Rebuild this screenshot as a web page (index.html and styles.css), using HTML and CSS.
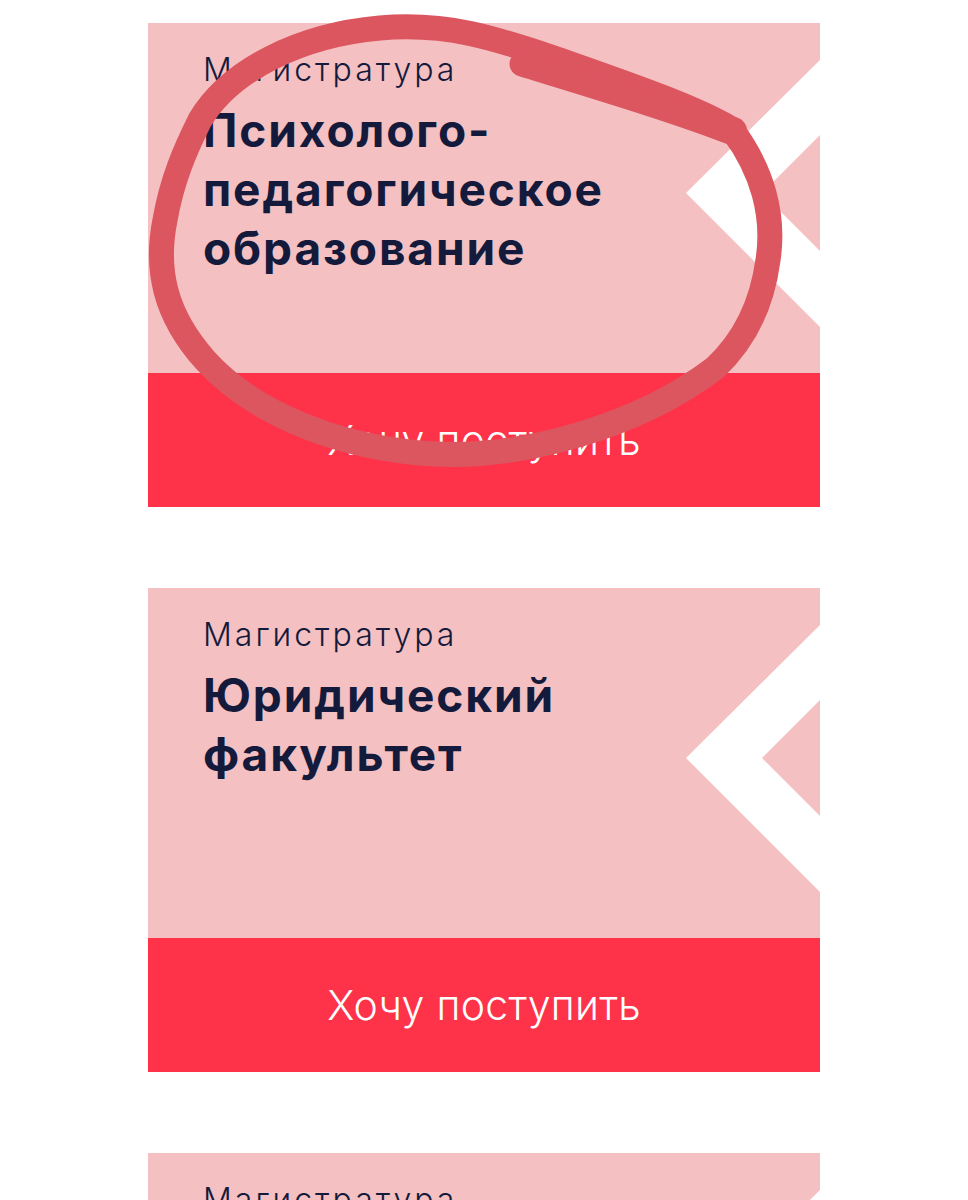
FILE: index.html
```html
<!DOCTYPE html>
<html lang="ru">
<head>
<meta charset="utf-8">
<title>Магистратура</title>
<link rel="stylesheet" href="styles.css">
</head>
<body>
<main class="list">
  <article class="card">
    <div class="card-body">
      <svg class="chevron" viewBox="0 0 134 267" aria-hidden="true"><polygon points="134,0 0,133 134,267 134,191 76,133 134,75" fill="#fff"/></svg>
      <p class="level">Магистратура</p>
      <h2 class="title">Психолого-<br>педагогическое<br>образование</h2>
    </div>
    <a class="cta" href="#">Хочу поступить</a>
  </article>
  <article class="card">
    <div class="card-body">
      <svg class="chevron" viewBox="0 0 134 267" aria-hidden="true"><polygon points="134,0 0,133 134,267 134,191 76,133 134,75" fill="#fff"/></svg>
      <p class="level">Магистратура</p>
      <h2 class="title">Юридический<br>факультет</h2>
    </div>
    <a class="cta" href="#">Хочу поступить</a>
  </article>
  <article class="card">
    <div class="card-body">
      <svg class="chevron" viewBox="0 0 134 267" aria-hidden="true"><polygon points="134,0 0,133 134,267 134,191 76,133 134,75" fill="#fff"/></svg>
      <p class="level">Магистратура</p>
      <h2 class="title">Экономический<br>факультет</h2>
    </div>
    <a class="cta" href="#">Хочу поступить</a>
  </article>
</main>
<svg class="scribble" viewBox="0 0 968 520" aria-hidden="true">
  <g fill="none" stroke="#dc5660" stroke-width="25" stroke-linecap="round" stroke-linejoin="round">
    <path d="M733 131 C762 170 775 215 768 260 C762 305 745 340 715 368 C640 425 520 462 420 453 C330 445 250 410 205 360 C165 315 155 270 165 220 C172 180 185 150 200 120 C230 70 300 35 380 28 C450 22 500 40 560 60 C630 85 690 105 730 128"/>
    <path d="M522 64 C600 88 680 112 733 133"/>
  </g>
  <circle cx="733" cy="131" r="14" fill="#dc5660"/>
</svg>
</body>
</html>
```
FILE: styles.css
```css
html, body {
  margin: 0;
  padding: 0;
  background: #ffffff;
}
body {
  position: relative;
  width: 968px;
  height: 1200px;
  overflow: hidden;
  font-family: "Inter", "Noto Sans", sans-serif;
}
.list {
  display: flex;
  flex-direction: column;
  align-items: center;
  gap: 81px;
  padding-top: 23px;
}
.card {
  width: 672px;
  display: flex;
  flex-direction: column;
}
.card-body {
  position: relative;
  height: 350px;
  background: #f4c0c1;
  padding: 0 55px;
  box-sizing: border-box;
  overflow: hidden;
}
.chevron {
  position: absolute;
  right: 0;
  top: 37px;
  width: 134px;
  height: 267px;
}
.level {
  position: relative;
  margin: 0;
  padding-top: 27px;
  font-size: 32px;
  line-height: 40px;
  font-weight: 300;
  color: #141a3c;
  letter-spacing: 3px;
}
.title {
  position: relative;
  margin: 11px 0 0;
  font-size: 46px;
  line-height: 59px;
  font-weight: 700;
  color: #141a3c;
  letter-spacing: 1.9px;
}
.cta {
  display: flex;
  align-items: center;
  justify-content: center;
  height: 134px;
  background: #fe3249;
  color: #ffffff;
  font-size: 41px;
  font-weight: 300;
  text-decoration: none;
  letter-spacing: 0.3px;
}
.scribble {
  position: absolute;
  left: 0;
  top: 0;
  width: 968px;
  height: 520px;
  pointer-events: none;
}
```
